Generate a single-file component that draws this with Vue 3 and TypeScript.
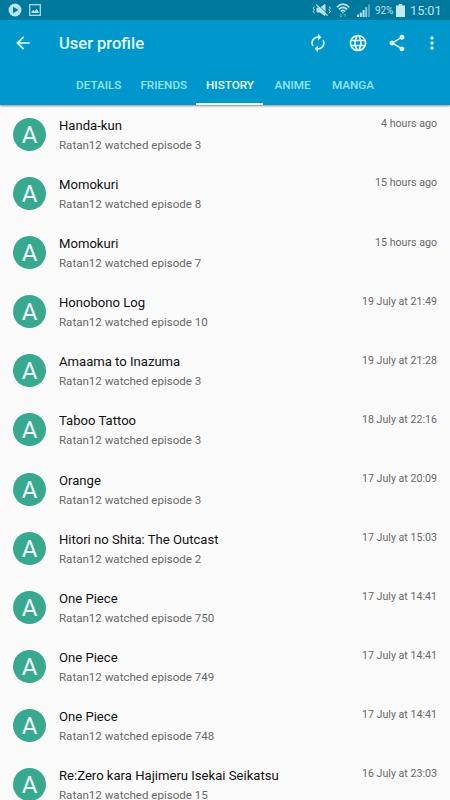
<script setup lang="ts">
interface Entry {
  title: string
  episode: number
  time: string
}

const tabs: string[] = ['Details', 'Friends', 'History', 'Anime', 'Manga']
const activeTab = 'History'

const entries: Entry[] = [
  { title: 'Handa-kun', episode: 3, time: '4 hours ago' },
  { title: 'Momokuri', episode: 8, time: '15 hours ago' },
  { title: 'Momokuri', episode: 7, time: '15 hours ago' },
  { title: 'Honobono Log', episode: 10, time: '19 July at 21:49' },
  { title: 'Amaama to Inazuma', episode: 3, time: '19 July at 21:28' },
  { title: 'Taboo Tattoo', episode: 3, time: '18 July at 22:16' },
  { title: 'Orange', episode: 3, time: '17 July at 20:09' },
  { title: 'Hitori no Shita: The Outcast', episode: 2, time: '17 July at 15:03' },
  { title: 'One Piece', episode: 750, time: '17 July at 14:41' },
  { title: 'One Piece', episode: 749, time: '17 July at 14:41' },
  { title: 'One Piece', episode: 748, time: '17 July at 14:41' },
  { title: 'Re:Zero kara Hajimeru Isekai Seikatsu', episode: 15, time: '16 July at 23:03' },
]
</script>

<template>
  <div class="screen">
    <header class="header">
      <div class="status">
        <svg class="st-play" viewBox="0 0 14 14"><circle cx="7" cy="7" r="6.5" fill="#b9e3ee" /><path d="M5 3.7 10.6 7 5 10.3z" fill="#00799e" /></svg>
        <svg class="st-image" viewBox="0 0 12 12"><rect x=".7" y=".7" width="10.6" height="10.6" fill="none" stroke="#b9e3ee" stroke-width="1.2" /><path d="M2.5 9V7.5L4.3 6l1.3 1.2L7.5 5l2 2.5V9z" fill="#b9e3ee" /></svg>
        <span class="grow"></span>
        <svg class="st-mute" viewBox="0 0 20 14" fill="none" stroke="#b9e3ee" stroke-width="1"><path d="M5 5h3l5-3.5v11L8 9H5z" fill="#b9e3ee" /><path d="M5 .8 16.3 11.6" stroke="#00799e" stroke-width="1" /><path d="M4.3 1.6 15.6 12.6" stroke-width="1.3" /><path d="M2.5 3.5 1.2 5.2l1.3 1.6-1.3 1.6 1.3 1.9M17 3.5l1.3 1.7L17 6.8l1.3 1.6-1.3 1.9" stroke-width="1" /></svg>
        <svg class="st-wifi" viewBox="0 0 14 15" fill="none" stroke="#b9e3ee" stroke-width="1.6"><path d="M.8 4.2Q7-1.8 13.2 4.2M2.8 6.4Q7 2.4 11.2 6.4M4.8 8.4Q7 6.4 9.2 8.4" /><circle cx="7" cy="9.7" r=".8" fill="#b9e3ee" stroke="none" /><path d="M5 11v3M3.8 12.8 5 14l1.2-1.2M9 14v-3M7.8 12.2 9 11l1.2 1.2" stroke="#62b3ca" stroke-width=".8" /></svg>
        <svg class="st-signal" viewBox="0 0 13 13"><path d="M0 10.5h2V13H0zM2.8 8.5h2V13h-2zM5.6 6h2v7h-2z" fill="#b9e3ee" /><path d="M8.2 3.2h2V13h-2z" fill="#8bcbdc" /><path d="M11 .5h2V13h-2z" fill="#4ea6c0" /></svg>
        <span class="percent">92%</span>
        <svg class="st-battery" viewBox="0 0 9 13"><path d="M2.8 0h3.4v1.5H9V13H0V1.5h2.8z" fill="#c4e9f1" /></svg>
        <span class="clock">15:01</span>
      </div>
      <div class="toolbar">
        <svg class="icon back" viewBox="0 0 24 24"><path d="M20 11H7.83l5.59-5.59L12 4l-8 8 8 8 1.41-1.41L7.83 13H20z" /></svg>
        <h1 class="heading">User profile</h1>
        <svg class="icon" viewBox="0 0 24 24"><path d="M12 6v3l4-4-4-4v3c-4.42 0-8 3.58-8 8 0 1.57.46 3.03 1.24 4.26L6.7 14.8A5.87 5.87 0 0 1 6 12c0-3.31 2.69-6 6-6zm6.76 1.74L17.3 9.2c.44.84.7 1.79.7 2.8 0 3.31-2.69 6-6 6v-3l-4 4 4 4v-3c4.42 0 8-3.58 8-8 0-1.57-.46-3.03-1.24-4.26z" /></svg>
        <svg class="icon" viewBox="0 0 24 24"><path d="M11.99 2C6.47 2 2 6.48 2 12s4.47 10 9.99 10C17.52 22 22 17.52 22 12S17.52 2 11.99 2zm6.93 6h-2.95c-.32-1.25-.78-2.45-1.38-3.56 1.84.63 3.37 1.91 4.33 3.56zM12 4.04c.83 1.2 1.48 2.53 1.91 3.96h-3.82c.43-1.43 1.08-2.76 1.91-3.96zM4.26 14C4.1 13.36 4 12.69 4 12s.1-1.36.26-2h3.38c-.08.66-.14 1.32-.14 2s.06 1.34.14 2H4.26zm.82 2h2.95c.32 1.25.78 2.45 1.38 3.56-1.84-.63-3.37-1.9-4.33-3.56zm2.95-8H5.08c.96-1.66 2.49-2.93 4.33-3.56C8.81 5.55 8.35 6.75 8.03 8zM12 19.96c-.83-1.2-1.48-2.53-1.91-3.96h3.82c-.43 1.43-1.08 2.76-1.91 3.96zM14.34 14H9.66c-.09-.66-.16-1.32-.16-2s.07-1.35.16-2h4.68c.09.65.16 1.32.16 2s-.07 1.34-.16 2zm.25 5.56c.6-1.11 1.06-2.31 1.38-3.56h2.95c-.96 1.65-2.49 2.93-4.33 3.56zM16.36 14c.08-.66.14-1.32.14-2s-.06-1.34-.14-2h3.38c.16.64.26 1.31.26 2s-.1 1.36-.26 2h-3.38z" /></svg>
        <svg class="icon" viewBox="0 0 24 24"><path d="M18 16.08c-.76 0-1.44.3-1.96.77L8.91 12.7c.05-.23.09-.46.09-.7s-.04-.47-.09-.7l7.05-4.11c.54.5 1.25.81 2.04.81 1.66 0 3-1.34 3-3s-1.34-3-3-3-3 1.34-3 3c0 .24.04.47.09.7L8.04 9.81C7.5 9.31 6.79 9 6 9c-1.66 0-3 1.34-3 3s1.34 3 3 3c.79 0 1.5-.31 2.04-.81l7.12 4.16c-.05.21-.08.43-.08.65 0 1.61 1.31 2.92 2.92 2.92s2.92-1.31 2.92-2.92-1.31-2.92-2.92-2.92z" /></svg>
        <svg class="icon more" viewBox="0 0 24 24"><path d="M12 8c1.1 0 2-.9 2-2s-.9-2-2-2-2 .9-2 2 .9 2 2 2zm0 2c-1.1 0-2 .9-2 2s.9 2 2 2 2-.9 2-2-.9-2-2-2zm0 6c-1.1 0-2 .9-2 2s.9 2 2 2 2-.9 2-2-.9-2-2-2z" /></svg>
      </div>
      <nav class="tabs">
        <div v-for="tab in tabs" :key="tab" class="tab" :class="{ active: tab === activeTab }">{{ tab }}</div>
      </nav>
    </header>
    <main class="list">
      <div v-for="(entry, i) in entries" :key="i" class="row">
        <div class="avatar">A</div>
        <div class="body">
          <div class="title">{{ entry.title }}</div>
          <div class="sub">Ratan12 watched episode {{ entry.episode }}</div>
        </div>
        <div class="time">{{ entry.time }}</div>
      </div>
    </main>
  </div>
</template>

<style>
body {
  background: #fafafa;
}
</style>

<style scoped>
.screen {
  width: 450px;
  height: 800px;
  overflow: hidden;
  display: flex;
  flex-direction: column;
  background: #fafafa;
  font-family: Roboto, sans-serif;
}

.header {
  flex: none;
  height: 105px;
  display: flex;
  flex-direction: column;
  background: #0097cc;
  box-shadow: 0 1px 2px rgba(0, 0, 0, 0.45);
}

.status {
  height: 20px;
  display: flex;
  align-items: center;
  padding: 0 9px 0 8px;
  box-sizing: border-box;
  background: #00799e;
  color: #b9e3ee;
}

.grow {
  flex: 1;
}

.st-play {
  width: 14px;
  height: 14px;
}

.st-image {
  width: 12px;
  height: 12px;
  margin-left: 7px;
}

.st-mute {
  width: 20px;
  height: 14px;
}

.st-wifi {
  width: 14px;
  height: 15px;
  margin-left: 4px;
}

.st-signal {
  width: 13px;
  height: 13px;
  margin-left: 7px;
}

.percent {
  width: 20px;
  margin-left: 5px;
  font-size: 10px;
  letter-spacing: -0.1px;
  white-space: nowrap;
}

.st-battery {
  width: 9px;
  height: 13px;
  margin-left: 1px;
}

.clock {
  width: 31px;
  margin-left: 5px;
  font-size: 12.7px;
  white-space: nowrap;
}

.toolbar {
  height: 46px;
  display: flex;
  align-items: center;
  padding: 0 8px 0 13px;
}

.icon {
  flex: none;
  width: 20px;
  height: 20px;
  margin-left: 19.5px;
  fill: #e0ffff;
}

.back {
  margin-left: 0;
}

.more {
  margin-left: 15px;
}

.heading {
  flex: 1;
  margin: 0 0 0 26px;
  color: #e0fcff;
  font-size: 16.5px;
  font-weight: 500;
}

.tabs {
  height: 39px;
  display: grid;
  grid-template-columns: 64.5px 65.5px 67px 58px 63px;
  padding-left: 66px;
}

.tab {
  box-sizing: border-box;
  padding: 2px 0 0 1px;
  border-bottom: 2px solid transparent;
  color: #94e3f3;
  font-size: 11.7px;
  font-weight: 500;
  line-height: 35px;
  text-align: center;
  text-transform: uppercase;
}

.tab.active {
  color: #e6ffff;
  border-color: #e6ffff;
}

.row {
  height: 59.1px;
  display: flex;
  padding: 0 13px;
}

.avatar {
  flex: none;
  width: 33px;
  height: 33px;
  margin-top: 13px;
  border-radius: 50%;
  background: #38a98f;
  color: #f0fffa;
  font-size: 24px;
  line-height: 34px;
  text-align: center;
}

.body {
  flex: 1;
  margin: 12px 0 0 13px;
  white-space: nowrap;
}

.title {
  color: #111;
  font-size: 13.1px;
  line-height: 18px;
}

.sub {
  margin-top: 2px;
  color: #686868;
  font-size: 11.55px;
  line-height: 17px;
}

.time {
  margin-top: 12.4px;
  color: #686868;
  font-size: 10.65px;
  line-height: 14px;
  white-space: nowrap;
}
</style>
